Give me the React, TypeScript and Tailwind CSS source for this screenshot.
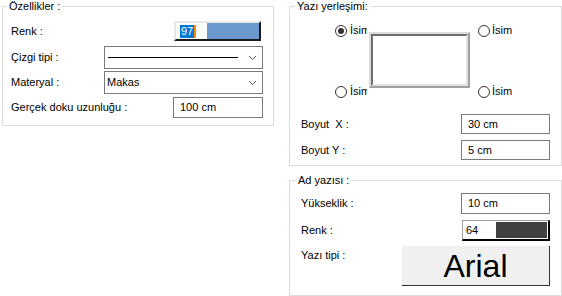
import React from "react";

const Chevron = () => (
  <svg width="9" height="6" viewBox="0 0 9 6" className="shrink-0">
    <polyline points="1,1 4.5,4.5 8,1" fill="none" stroke="#5a5a5a" strokeWidth="1" />
  </svg>
);

function Radio({ checked, label, clip }: { checked?: boolean; label: string; clip?: boolean }) {
  return (
    <div className="flex items-center h-[13px]">
      <div className="w-[12px] h-[12px] rounded-full border border-[#333333] bg-white flex items-center justify-center shrink-0">
        {checked && <div className="w-[6px] h-[6px] rounded-full bg-[#333333]" />}
      </div>
      <div className={clip ? "ml-[3px] w-[17px] overflow-hidden whitespace-nowrap leading-[13px]" : "ml-[2px] whitespace-nowrap leading-[13px]"}>
        {label}
      </div>
    </div>
  );
}

function TextBox({ value, w, h }: { value: string; w: string; h: string }) {
  return (
    <div className={`${w} ${h} border border-[#7a7a7a] bg-white flex items-center pl-[6px] leading-[13px]`}>
      {value}
    </div>
  );
}

export default function App() {
  return (
    <div className="w-[562px] h-[296px] bg-white flex text-[11px] text-black font-['Liberation_Sans',Arial,sans-serif] overflow-hidden">
      {/* Left group */}
      <fieldset className="ml-[2px] w-[272px] h-[126px] border border-[#dcdcdc] m-0 p-0">
        <legend className="ml-[4px] px-[2px] leading-[13px]">Özellikler :</legend>
        <div className="pl-[8px] pr-[10px] flex flex-col">
          <div className="mt-[8px] h-[20px] flex items-center justify-between">
            <span className="leading-[13px]">Renk :</span>
            <div className="mr-[2px] w-[87px] h-[20px] border-2 border-t-[#e8e8e8] border-l-[#e8e8e8] border-r-[#1a1a1a] border-b-[#1a1a1a] flex bg-white">
              <div className="w-[31px] h-full bg-white flex items-center pl-[4px]">
                <span className="bg-[#0078d7] text-white leading-[13px] px-[1px]">97</span>
                <span className="w-[2px] h-[13px] bg-[#ff8c00]" />
              </div>
              <div className="flex-1 h-full bg-[#6a98cf]" />
            </div>
          </div>
          <div className="mt-[5px] h-[23px] flex items-center justify-between">
            <span className="leading-[13px]">Çizgi tipi :</span>
            <div className="w-[159px] h-[23px] border border-[#7a7a7a] bg-white flex items-center justify-between pl-[3px] pr-[5px]">
              <div className="w-[130px] h-[1px] bg-black" />
              <Chevron />
            </div>
          </div>
          <div className="mt-[2px] h-[23px] flex items-center justify-between">
            <span className="leading-[13px]">Materyal :</span>
            <div className="w-[159px] h-[23px] border border-[#7a7a7a] bg-white flex items-center justify-between pl-[2px] pr-[5px]">
              <span className="leading-[13px]">Makas</span>
              <Chevron />
            </div>
          </div>
          <div className="mt-[3px] h-[21px] flex items-center justify-between">
            <span className="leading-[13px]">Gerçek doku uzunluğu :</span>
            <TextBox value="100 cm" w="w-[90px]" h="h-[21px]" />
          </div>
        </div>
      </fieldset>

      {/* Right column */}
      <div className="ml-[15px] w-[273px] flex flex-col">
        <fieldset className="w-[273px] h-[166px] border border-[#dcdcdc] m-0 p-0">
          <legend className="ml-[5px] px-[2px] leading-[13px]">Yazı yerleşimi:</legend>
          <div className="pl-[11px] pr-[11px] flex flex-col">
            <div className="mt-[11px] h-[74px] flex pl-[34px]">
              <div className="h-full flex flex-col justify-between">
                <Radio checked label="İsim" clip />
                <Radio label="İsim" clip />
              </div>
              <div className="ml-[2px] mt-[8px] w-[101px] h-[56px] border-2 border-t-[#dadada] border-l-[#dadada] border-r-[#a0a0a0] border-b-[#a0a0a0]">
                <div className="w-full h-full border-2 border-t-[#6e6e6e] border-l-[#6e6e6e] border-r-[#e2e2e2] border-b-[#e2e2e2] bg-white" />
              </div>
              <div className="ml-[8px] h-full flex flex-col justify-between">
                <Radio label="İsim" />
                <Radio label="İsim" />
              </div>
            </div>
            <div className="mt-[16px] h-[20px] flex items-center justify-between">
              <span className="leading-[13px]">Boyut&nbsp; X :</span>
              <TextBox value="30 cm" w="w-[89px]" h="h-[20px]" />
            </div>
            <div className="mt-[6px] h-[20px] flex items-center justify-between">
              <span className="leading-[13px]">Boyut Y :</span>
              <TextBox value="5 cm" w="w-[89px]" h="h-[20px]" />
            </div>
          </div>
        </fieldset>

        <fieldset className="mt-[8px] w-[273px] h-[122px] border border-[#dcdcdc] m-0 p-0">
          <legend className="ml-[6px] px-[2px] leading-[13px]">Ad yazısı :</legend>
          <div className="pl-[11px] pr-[11px] flex flex-col">
            <div className="mt-[6px] h-[21px] flex items-center justify-between">
              <span className="leading-[13px]">Yükseklik :</span>
              <TextBox value="10 cm" w="w-[89px]" h="h-[21px]" />
            </div>
            <div className="mt-[6px] h-[21px] flex items-center justify-between">
              <span className="leading-[13px]">Renk :</span>
              <div className="w-[88px] h-[21px] border-t border-l border-t-[#a0a0a0] border-l-[#a0a0a0] border-r-2 border-b-2 border-r-black border-b-black bg-white p-[1px] flex">
                <div className="w-[30px] h-full flex items-center pl-[2px] leading-[13px]">64</div>
                <div className="ml-[2px] flex-1 h-full bg-[#404040]" />
              </div>
            </div>
            <div className="mt-[5px] h-[40px] flex items-start justify-between">
              <span className="mt-[3px] leading-[13px]">Yazı tipi :</span>
              <div className="w-[148px] h-[40px] bg-[#f0f0f0] border-r border-b border-r-[#333333] border-b-[#333333] flex items-center justify-center text-[32px] leading-[36px]">
                Arial
              </div>
            </div>
          </div>
        </fieldset>
      </div>
    </div>
  );
}
